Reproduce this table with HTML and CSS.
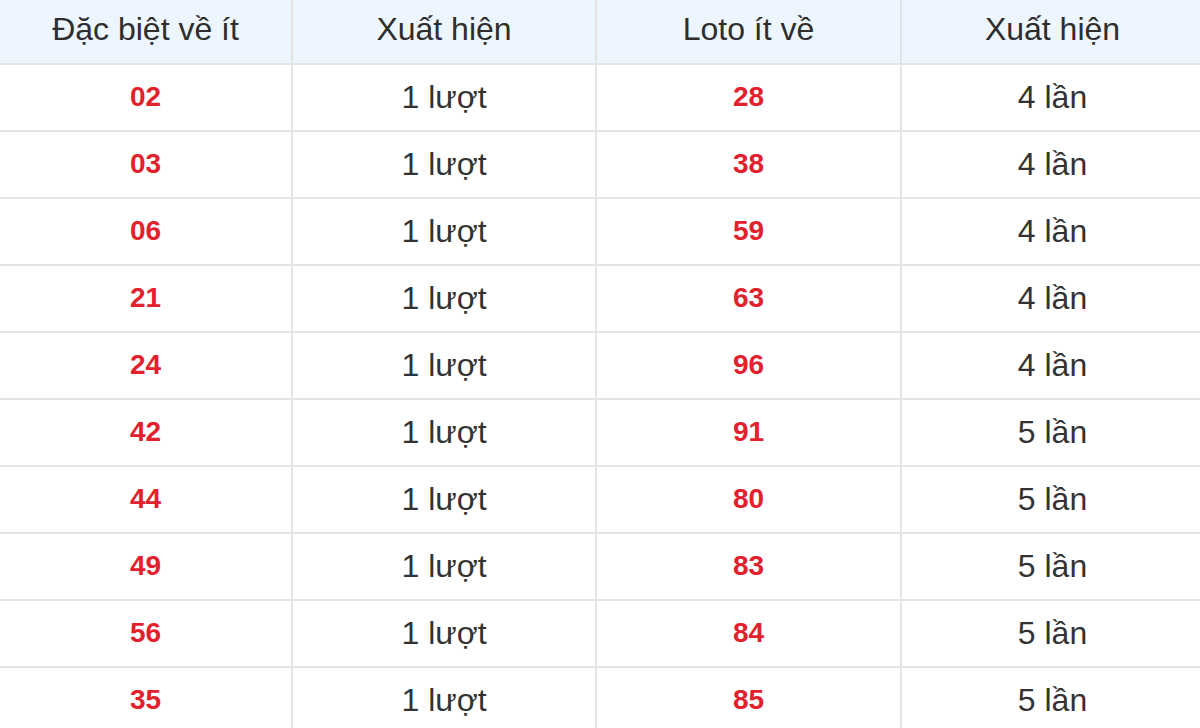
FILE: index.html
```html
<!DOCTYPE html>
<html lang="vi">
<head>
<meta charset="utf-8">
<link rel="stylesheet" href="styles.css">
</head>
<body>
<table class="stats">
  <colgroup>
    <col class="c1"><col class="c2"><col class="c3"><col class="c4">
  </colgroup>
  <thead>
    <tr><th>Đặc biệt về ít</th><th>Xuất hiện</th><th>Loto ít về</th><th>Xuất hiện</th></tr>
  </thead>
  <tbody>
    <tr><td class="num">02</td><td>1 lượt</td><td class="num">28</td><td>4 lần</td></tr>
    <tr><td class="num">03</td><td>1 lượt</td><td class="num">38</td><td>4 lần</td></tr>
    <tr><td class="num">06</td><td>1 lượt</td><td class="num">59</td><td>4 lần</td></tr>
    <tr><td class="num">21</td><td>1 lượt</td><td class="num">63</td><td>4 lần</td></tr>
    <tr><td class="num">24</td><td>1 lượt</td><td class="num">96</td><td>4 lần</td></tr>
    <tr><td class="num">42</td><td>1 lượt</td><td class="num">91</td><td>5 lần</td></tr>
    <tr><td class="num">44</td><td>1 lượt</td><td class="num">80</td><td>5 lần</td></tr>
    <tr><td class="num">49</td><td>1 lượt</td><td class="num">83</td><td>5 lần</td></tr>
    <tr><td class="num">56</td><td>1 lượt</td><td class="num">84</td><td>5 lần</td></tr>
    <tr><td class="num">35</td><td>1 lượt</td><td class="num">85</td><td>5 lần</td></tr>
  </tbody>
</table>
</body>
</html>
```
FILE: styles.css
```css
html, body {
  margin: 0;
  padding: 0;
  background: #ffffff;
  overflow: hidden;
}
body {
  font-family: "Liberation Sans", Arial, sans-serif;
  color: #333333;
}
.stats {
  border-collapse: collapse;
  table-layout: fixed;
  width: 1204px;
  font-size: 32px;
}
.c1 { width: 292px; }
.c2 { width: 304px; }
.c3 { width: 305px; }
.c4 { width: 303px; }
.stats th,
.stats td {
  border: 2px solid #e4e4e4;
  text-align: center;
  padding: 0;
  font-weight: normal;
  line-height: 1;
}
.stats tr > :first-child { border-left: none; }
.stats thead tr th { border-top: none; }
.stats th {
  background: #edf5fe;
  height: 58px;
  padding-bottom: 5px;
  color: #2e2e2e;
}
.stats td {
  height: 63px;
  padding-bottom: 2px;
}
.stats td.num {
  color: #e3212d;
  font-weight: bold;
  font-size: 28px;
}
```
